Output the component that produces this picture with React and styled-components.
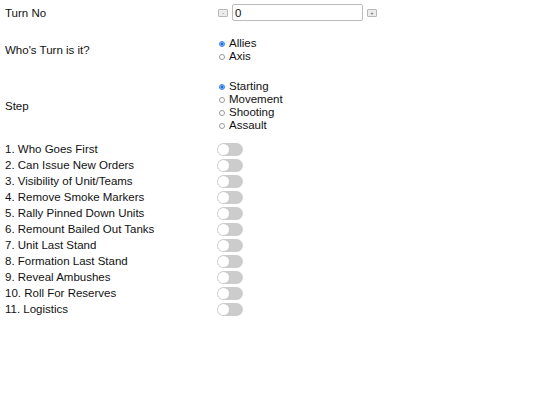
import { createGlobalStyle, styled } from "styled-components";

const GlobalStyle = createGlobalStyle`
  body {
    margin: 0;
    background: #fff;
    font-family: "Liberation Sans", Arial, sans-serif;
    font-size: 11.5px;
    color: #111;
  }
`;

const Page = styled.div`
  padding: 4px 5px;
  display: flex;
  flex-direction: column;
`;

const Row = styled.div`
  display: grid;
  grid-template-columns: 212px 1fr;
  align-items: center;
  margin-bottom: ${(p) => p.$gap || 0}px;
`;

const Label = styled.div`
  line-height: 16px;
`;

const Stepper = styled.div`
  display: flex;
  align-items: center;
  gap: 4px;
  padding-left: 1px;
`;

const SmallButton = styled.button`
  width: 10px;
  height: 8px;
  padding: 0;
  border: 1px solid #b8b8b8;
  border-radius: 1px;
  background: #ececec;
  font-size: 5px;
  line-height: 6px;
  color: #444;
  font-family: inherit;
`;

const NumberInput = styled.input`
  box-sizing: border-box;
  width: 131px;
  height: 17px;
  border: 1px solid #bdbdbd;
  border-radius: 2px;
  padding: 0 2px;
  font-family: inherit;
  font-size: 11.5px;
  color: #111;
  outline: none;
`;

const RadioList = styled.div`
  display: flex;
  flex-direction: column;
  padding-left: 2px;
`;

const RadioItem = styled.label`
  display: flex;
  align-items: center;
  gap: 4px;
  line-height: 13px;
`;

const Dot = styled.span`
  box-sizing: border-box;
  width: 6px;
  height: 6px;
  border-radius: 50%;
  border: 1px solid ${(p) => (p.$on ? "#3b82e8" : "#9a9a9a")};
  background: ${(p) => (p.$on ? "radial-gradient(circle, #1a6fe0 45%, #9cc3f5 60%)" : "#fff")};
`;

const Toggle = styled.span`
  display: inline-block;
  position: relative;
  width: 26px;
  height: 13px;
  border-radius: 7px;
  background: #cccccc;
  &::after {
    content: "";
    position: absolute;
    left: 1px;
    top: 1px;
    width: 11px;
    height: 11px;
    border-radius: 50%;
    background: #fff;
  }
`;

const Rule = styled.div`
  display: grid;
  grid-template-columns: 212px 1fr;
  align-items: center;
  height: 16px;
`;

const rules = [
  "1. Who Goes First",
  "2. Can Issue New Orders",
  "3. Visibility of Unit/Teams",
  "4. Remove Smoke Markers",
  "5. Rally Pinned Down Units",
  "6. Remount Bailed Out Tanks",
  "7. Unit Last Stand",
  "8. Formation Last Stand",
  "9. Reveal Ambushes",
  "10. Roll For Reserves",
  "11. Logistics",
];

const Radios = ({ options, selected }) => (
  <RadioList>
    {options.map((o) => (
      <RadioItem key={o}>
        <Dot $on={o === selected} />
        {o}
      </RadioItem>
    ))}
  </RadioList>
);

export default function App() {
  return (
    <>
      <GlobalStyle />
      <Page>
        <Row $gap={16}>
          <Label>Turn No</Label>
          <Stepper>
            <SmallButton>-</SmallButton>
            <NumberInput defaultValue="0" />
            <SmallButton>+</SmallButton>
          </Stepper>
        </Row>
        <Row $gap={17}>
          <Label>Who's Turn is it?</Label>
          <Radios options={["Allies", "Axis"]} selected="Allies" />
        </Row>
        <Row $gap={9}>
          <Label>Step</Label>
          <Radios
            options={["Starting", "Movement", "Shooting", "Assault"]}
            selected="Starting"
          />
        </Row>
        {rules.map((r) => (
          <Rule key={r}>
            <Label>{r}</Label>
            <Toggle />
          </Rule>
        ))}
      </Page>
    </>
  );
}
